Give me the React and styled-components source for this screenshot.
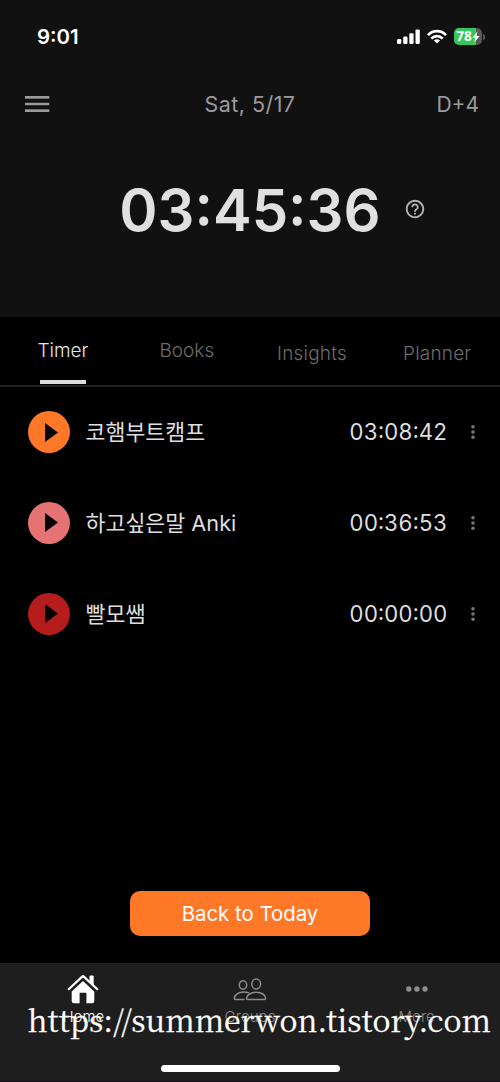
import React from 'react';
import styled, { createGlobalStyle } from 'styled-components';
import { MdHelpOutline } from 'react-icons/md';

const tabs = [
  { label: 'Timer', left: 37.5, active: true },
  { label: 'Books', left: 159.5 },
  { label: 'Insights', left: 277, low: true },
  { label: 'Planner', left: 403, low: true },
];

const subjects = [
  { name: '코햄부트캠프', time: '03:08:42', color: '#ff7827' },
  { name: '하고싶은말 Anki', time: '00:36:53', color: '#e57373' },
  { name: '빨모쌤', time: '00:00:00', color: '#b71c1c' },
];

const SignalIcon = () => (
  <svg width="23" height="16" viewBox="0 0 23 16" fill="#fff">
    <rect x="0" y="10" width="4.3" height="5" rx="1.2" />
    <rect x="6.2" y="7.6" width="4.3" height="7.4" rx="1.2" />
    <rect x="12.3" y="4.2" width="4.3" height="10.8" rx="1.2" />
    <rect x="18.5" y="0.4" width="4.3" height="14.6" rx="1.2" />
  </svg>
);

const WifiIcon = () => (
  <svg width="20" height="16" viewBox="0 0 20 16" fill="none" stroke="#fff" strokeWidth="2.7">
    <path d="M1 6.1C6 0.9 14 0.9 19 6.1" />
    <path d="M4.3 9.6C7.6 6.4 12.4 6.4 15.7 9.6" />
    <path d="M10 14.6L6.9 11.5C8.7 9.8 11.3 9.8 13.1 11.5Z" fill="#fff" stroke="none" />
  </svg>
);

const BoltIcon = () => (
  <svg width="8" height="12" viewBox="0 0 8 12" fill="#fff">
    <path d="M5.4 0.6L0.4 6.8H3.3L2.2 11.6L7.7 5.1H4.6Z" />
  </svg>
);

const MenuIcon = () => (
  <svg width="25" height="16" viewBox="0 0 25 16" fill="#9b9b9b">
    <rect width="24.3" height="2.7" />
    <rect y="6.8" width="24.3" height="2.4" />
    <rect y="13.3" width="24.3" height="2.7" />
  </svg>
);

const HomeIcon = () => (
  <svg width="32" height="30" viewBox="0 0 32 30">
    <path d="M22.5 2.4a1 1 0 0 1 1-1h2.2a1 1 0 0 1 1 1v9l-4.2-4z" fill="#fff" />
    <path
      d="M1.7 15.2L15.2 2.6a1.2 1.2 0 0 1 1.6 0L30.3 15.2"
      fill="none"
      stroke="#fff"
      strokeWidth="2.2"
      strokeLinecap="round"
    />
    <path
      d="M16 6.9L27.3 17.4V27a2.2 2.2 0 0 1-2.2 2.2H19.4V18.8H12.6V29.2H6.9A2.2 2.2 0 0 1 4.7 27V17.4Z"
      fill="#fff"
    />
  </svg>
);

const GroupsIcon = () => (
  <svg width="34" height="24" viewBox="0 0 34 24" fill="none" stroke="#8b8b8b" strokeWidth="1.5">
    <ellipse cx="10" cy="8" rx="3.7" ry="4.2" />
    <ellipse cx="23.2" cy="7" rx="4.4" ry="5" />
    <path d="M16 15.9C14.3 15.3 12.4 15 10.7 15C5.6 15 1.4 18 1.4 21.2C1.4 22 1.8 22.4 2.6 22.4H11.5" />
    <path d="M23.2 15.2C17.8 15.2 13.6 18 13.6 21.2C13.6 22 14 22.4 14.8 22.4H31.4C32.2 22.4 32.6 22 32.6 21.2C32.6 18 28.6 15.2 23.2 15.2Z" />
  </svg>
);

const MoreIcon = () => (
  <svg width="22" height="6" viewBox="0 0 22 6" fill="#8e8e8e">
    <circle cx="2.8" cy="3" r="2.7" />
    <circle cx="10.9" cy="3" r="2.7" />
    <circle cx="19" cy="3" r="2.7" />
  </svg>
);

const KebabIcon = () => (
  <svg width="4" height="16" viewBox="0 0 4 16" fill="#777">
    <circle cx="2" cy="2.7" r="1.8" />
    <circle cx="2" cy="8" r="1.8" />
    <circle cx="2" cy="13.3" r="1.8" />
  </svg>
);

const PlayIcon = () => (
  <svg width="13" height="19" viewBox="0 0 13 19">
    <path d="M0 0L13 9.5L0 19Z" fill="#000" />
  </svg>
);

const App = () => {
  return (
    <Screen>
      <GlobalStyle />
      <Header>
        <StatusBar>
          <StatusTime>9:01</StatusTime>
          <StatusIcons>
            <SignalIcon />
            <WifiIcon />
            <BatteryWrapper>
              <Battery>
                <span>78</span>
                <BoltIcon />
              </Battery>
              <BatteryTip />
            </BatteryWrapper>
          </StatusIcons>
        </StatusBar>
        <DateBar>
          <MenuIcon />
          <DateText>Sat, 5/17</DateText>
          <DDay>D+4</DDay>
        </DateBar>
        <ClockRow>
          <Clock>03:45:36</Clock>
          <HelpButton>
            <MdHelpOutline size={22} />
          </HelpButton>
        </ClockRow>
      </Header>

      <TabBar>
        {tabs.map((tab) => (
          <Tab key={tab.label} $left={tab.left} $active={tab.active} $low={tab.low}>
            {tab.label}
            {tab.active && <TabMark />}
          </Tab>
        ))}
      </TabBar>

      <SubjectList>
        {subjects.map((subject) => (
          <Subject key={subject.name}>
            <PlayButton $color={subject.color}>
              <PlayIcon />
            </PlayButton>
            <SubjectName>{subject.name}</SubjectName>
            <SubjectTime>{subject.time}</SubjectTime>
            <KebabIcon />
          </Subject>
        ))}
      </SubjectList>

      <TodayButton>Back to Today</TodayButton>

      <BottomNav>
        <NavList>
          <NavItem $active>
            <NavIcon>
              <HomeIcon />
            </NavIcon>
            Home
          </NavItem>
          <NavItem>
            <NavIcon>
              <GroupsIcon />
            </NavIcon>
            Groups
          </NavItem>
          <NavItem>
            <NavIcon>
              <MoreIcon />
            </NavIcon>
            More
          </NavItem>
        </NavList>
        <HomeIndicator />
        <Watermark>https://summerwon.tistory.com</Watermark>
      </BottomNav>
    </Screen>
  );
};

const GlobalStyle = createGlobalStyle`
  * {
    box-sizing: border-box;
  }
  body {
    margin: 0;
    background: #000000;
  }
  svg {
    display: block;
    flex-shrink: 0;
  }
`;

const Screen = styled.div`
  display: flex;
  flex-direction: column;
  width: 500px;
  height: 1082px;
  overflow: hidden;
  background: #000000;
  color: #dedede;
  font-family: Inter, 'Noto Sans CJK KR', sans-serif;
`;
const Header = styled.header`
  height: 317px;
  background: #111111;
`;
const StatusBar = styled.div`
  display: flex;
  justify-content: space-between;
  align-items: center;
  height: 73px;
  padding: 0 15px 0 37px;
  color: #ffffff;
`;
const StatusTime = styled.div`
  font-size: 20.4px;
  font-weight: 560;
`;
const StatusIcons = styled.div`
  display: flex;
  align-items: center;
  gap: 7px;
`;
const BatteryWrapper = styled.div`
  display: flex;
  align-items: center;
  gap: 1px;
`;
const Battery = styled.div`
  display: flex;
  justify-content: center;
  align-items: center;
  width: 28px;
  height: 17px;
  border-radius: 5px;
  background: linear-gradient(to right, #34c759 78%, #58585a 78%);
  font-family: 'Noto Sans', sans-serif;
  font-size: 13.5px;
  font-weight: 700;
  line-height: 17px;
`;
const BatteryTip = styled.div`
  width: 2px;
  height: 6px;
  border-radius: 0 2px 2px 0;
  background: #58585a;
`;
const DateBar = styled.div`
  display: grid;
  grid-template-columns: 1fr auto 1fr;
  align-items: center;
  height: 62px;
  padding: 0 21px 0 25px;
  color: #9b9b9b;
  font-size: 21.5px;
`;
const DateText = styled.div`
  margin-right: 4px;
  letter-spacing: 0.45px;
`;
const DDay = styled.div`
  justify-self: end;
  font-size: 21px;
`;
const ClockRow = styled.div`
  display: grid;
  grid-template-columns: 1fr auto 1fr;
  align-items: center;
  height: 149px;
`;
const Clock = styled.div`
  grid-column: 2;
  color: #e0e0e0;
  font-size: 58px;
  font-weight: 600;
  line-height: 70px;
`;
const HelpButton = styled.div`
  margin: 0 0 1px 23px;
  color: #b4b4b4;
`;
const TabBar = styled.nav`
  display: grid;
  height: 70px;
  border-bottom: 2px solid #222222;
`;
const Tab = styled.div`
  display: flex;
  flex-direction: column;
  grid-area: 1 / 1;
  justify-self: start;
  height: 67px;
  margin-left: ${({ $left }) => $left}px;
  padding-top: ${({ $low }) => ($low ? 24.5 : 22)}px;
  color: ${({ $active }) => ($active ? '#e6e6e6' : '#6c6c6c')};
  font-size: 19px;
  font-weight: 320;
  line-height: 24px;
  letter-spacing: ${({ $low }) => ($low ? 0.2 : 0)}px;
`;
const TabMark = styled.div`
  align-self: center;
  width: 46px;
  height: 4px;
  margin-top: auto;
  background: #e0dcdc;
`;
const SubjectList = styled.div`
  display: flex;
  flex-direction: column;
  gap: 48.8px;
  padding: 24px 25px 0 28px;
`;
const Subject = styled.div`
  display: flex;
  align-items: center;
  height: 42px;
`;
const PlayButton = styled.div`
  display: flex;
  align-items: center;
  width: 42px;
  height: 42px;
  padding-left: 17px;
  border-radius: 50%;
  background: ${({ $color }) => $color};
`;
const SubjectName = styled.div`
  margin-left: 15.5px;
  font-size: 21.7px;
  line-height: 42px;
`;
const SubjectTime = styled.div`
  margin: 0 23.5px 0 auto;
  font-size: 22.2px;
  font-variant-numeric: tabular-nums;
  line-height: 42px;
`;
const TodayButton = styled.div`
  width: 240px;
  height: 45px;
  margin: auto auto 27px;
  border-radius: 10px;
  background: #ff7827;
  color: #ffffff;
  font-size: 20.4px;
  line-height: 45px;
  text-align: center;
`;
const BottomNav = styled.footer`
  position: relative;
  height: 119px;
  border-bottom: 1px solid #1a1218;
  background: #1e1e1e;
`;
const NavList = styled.div`
  display: grid;
  grid-template-columns: repeat(3, 1fr);
  height: 102px;
`;
const NavItem = styled.div`
  display: flex;
  flex-direction: column;
  align-items: center;
  color: ${({ $active }) => ($active ? '#ffffff' : '#8b8b8b')};
  font-size: 15px;
  font-weight: 300;
  line-height: 18px;
`;
const NavIcon = styled.div`
  display: flex;
  align-items: center;
  height: 45px;
  padding-top: 7px;
`;
const HomeIndicator = styled.div`
  width: 179px;
  height: 7px;
  margin: 0 auto;
  border-radius: 4px;
  background: #ffffff;
`;
// blog address printed over the bottom bar
const Watermark = styled.div`
  position: absolute;
  top: 34px;
  left: 27.5px;
  color: #ffffff;
  font-family: 'Noto Serif CJK KR', 'Noto Serif', serif;
  font-size: 30.2px;
  line-height: 44px;
  white-space: nowrap;
  -webkit-text-stroke: 0.3px #ffffff;
`;

export default App;
